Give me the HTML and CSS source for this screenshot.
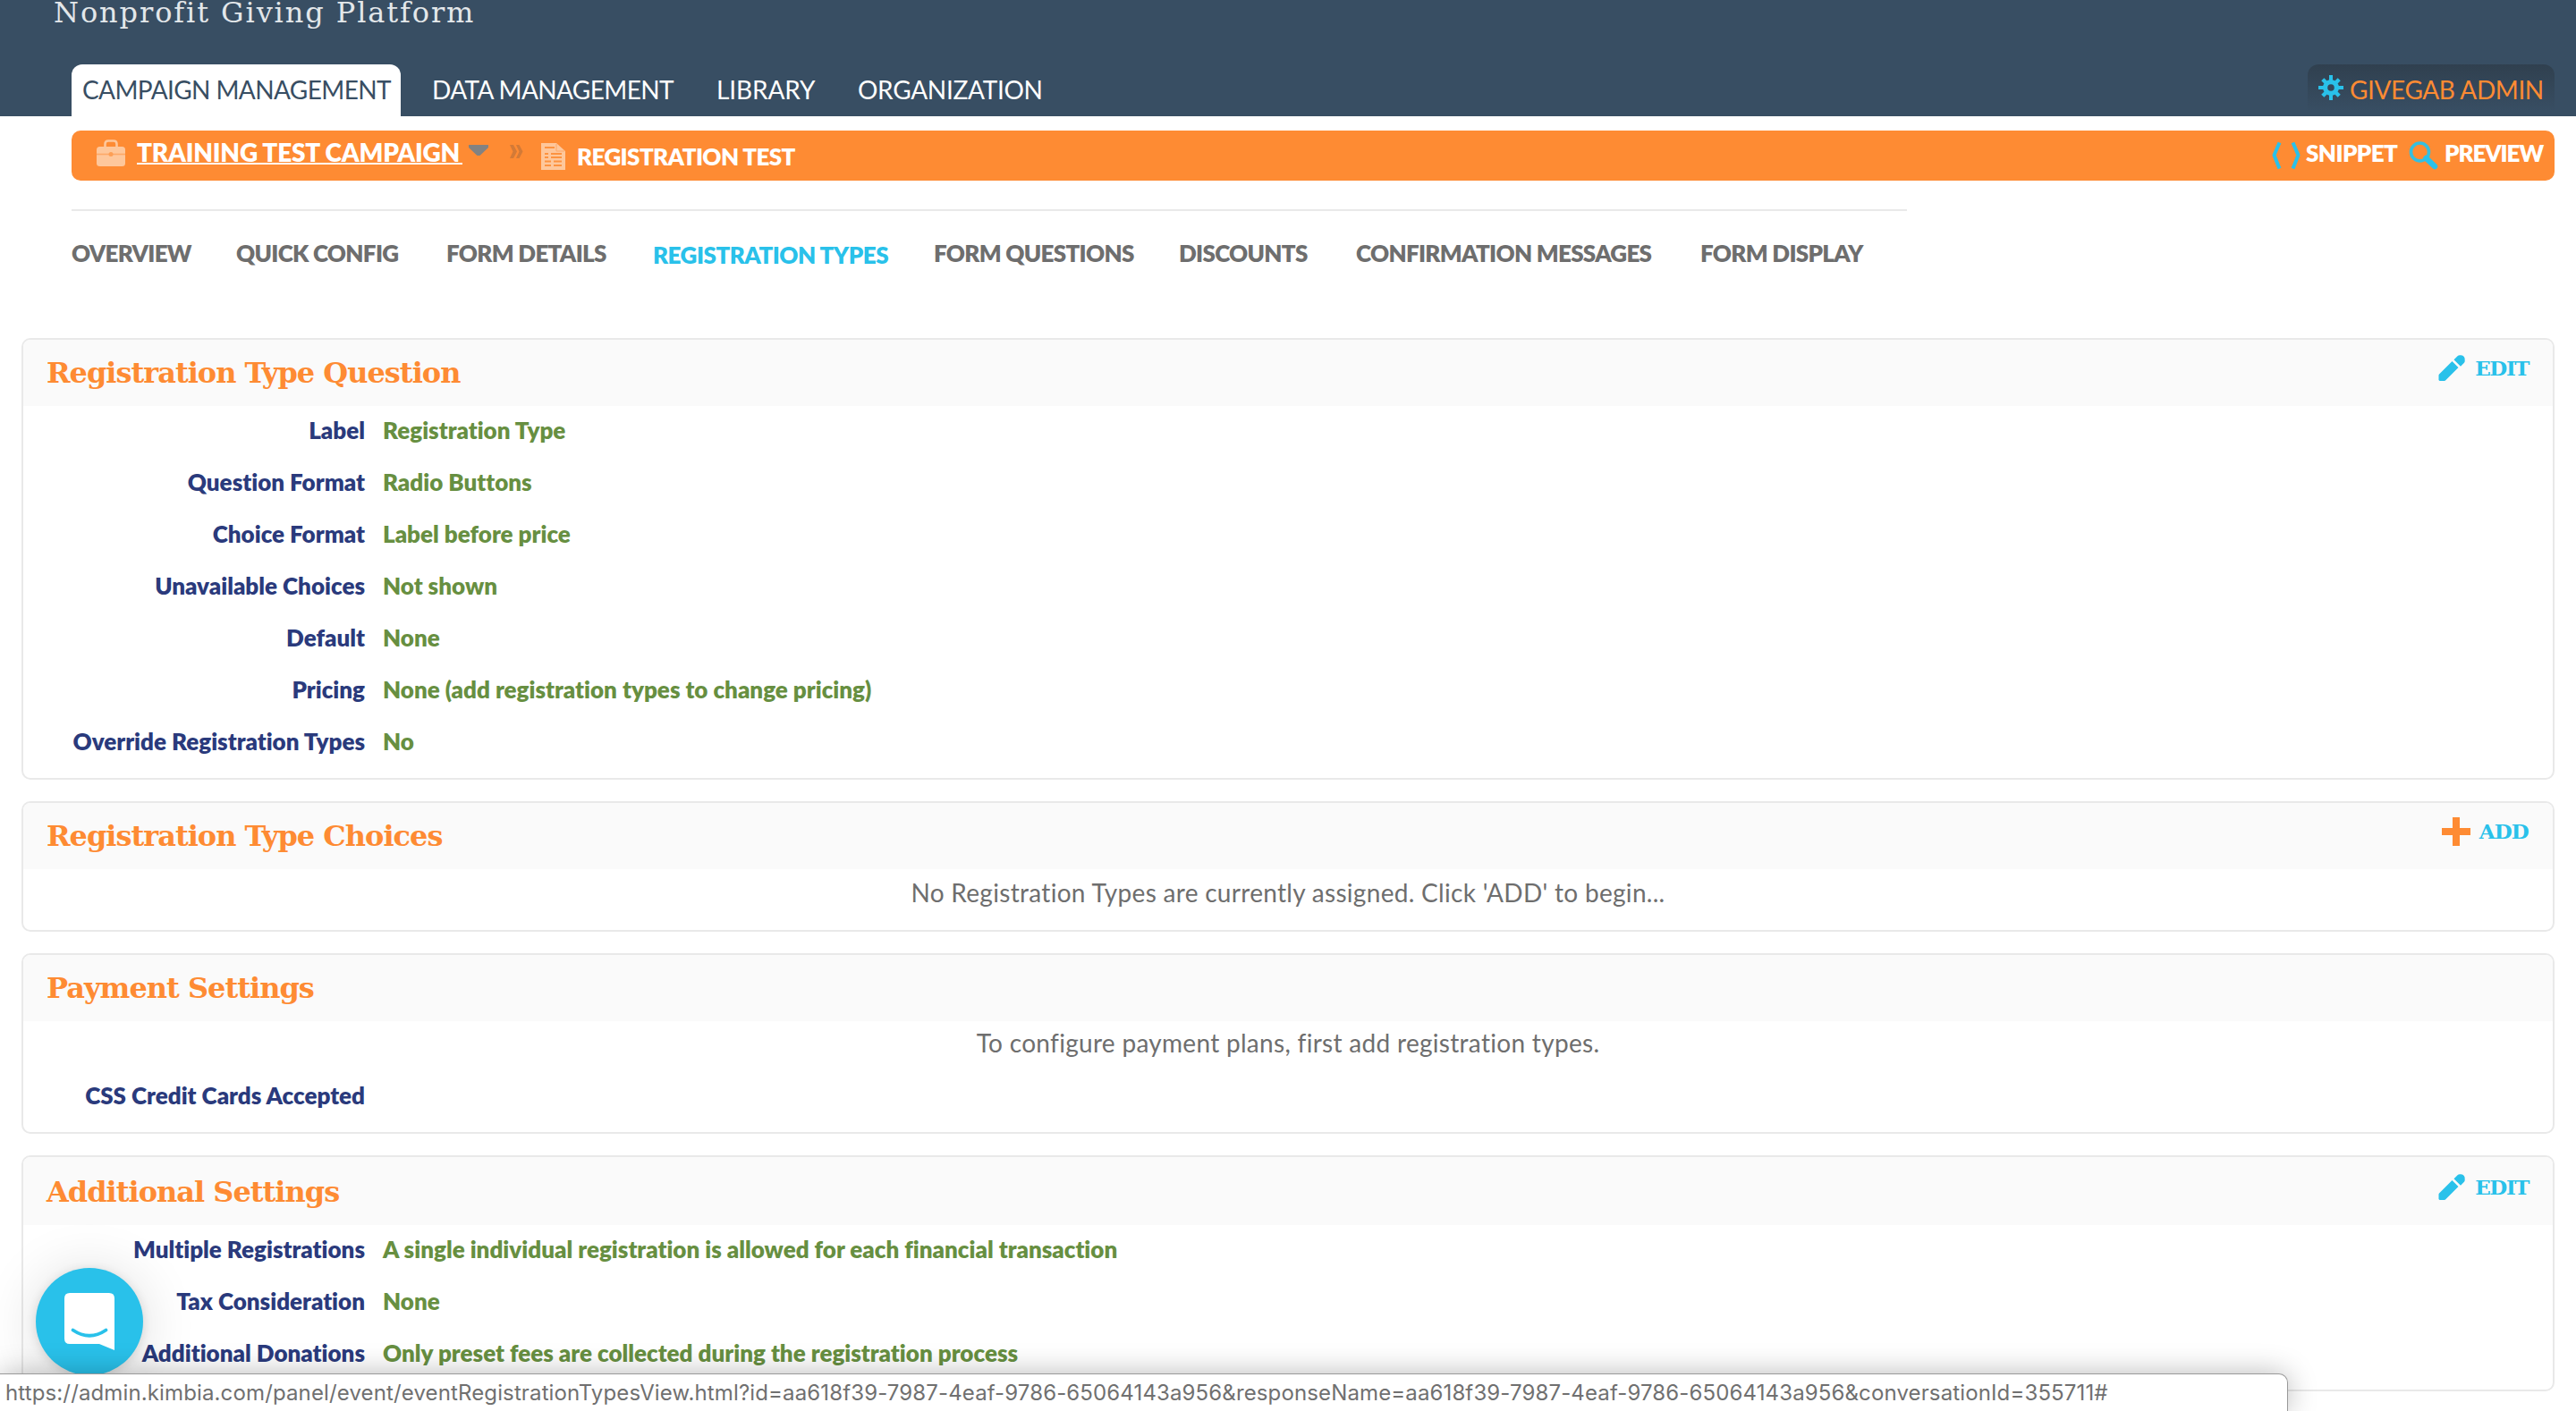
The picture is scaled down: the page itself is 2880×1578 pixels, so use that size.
FILE: index.html
```html
<!DOCTYPE html>
<html lang="en">
<head>
<meta charset="utf-8">
<title>Registration Types</title>
<link rel="stylesheet" href="styles.css">
</head>
<body>
<svg width="0" height="0" class="defs" aria-hidden="true">
  <symbol id="pencil" viewBox="0 0 30 30"><path d="M1 21.500 15.500 7l7 7L8 28.500 7 29H1.500L.5 28v-5.500zM17.500 5.200 21.500 1.200q1-.9 2.500-.9h1.500Q30 1 29.700 5.500V7q0 1-1 2l-3.700 3.700z" fill="#29c1ea"/></symbol>
</svg>

<header class="top">
  <div class="brand">Nonprofit Giving Platform</div>
  <div class="top-row">
    <nav class="tabs">
      <a class="tab current">CAMPAIGN MANAGEMENT</a>
      <a class="tab data">DATA MANAGEMENT</a>
      <a class="tab library">LIBRARY</a>
      <a class="tab organization">ORGANIZATION</a>
    </nav>
    <a class="admin">
      <svg class="gear" viewBox="-14 -14 28 28"><g fill="#29c1ea"><rect x="-2" y="-14" width="4" height="28"/><rect x="-14" y="-2" width="28" height="4"/><rect x="-2.200" y="-13" width="4.400" height="26" transform="rotate(45)"/><rect x="-2.200" y="-13" width="4.400" height="26" transform="rotate(-45)"/><circle r="9"/></g><circle r="3.800" fill="#34475a"/></svg>
      <span>GIVEGAB ADMIN</span>
    </a>
  </div>
</header>

<div class="crumbs">
  <svg class="briefcase" viewBox="0 0 32 30"><path d="M9.500 9V5q0-3.500 3.500-3.500h6q3.500 0 3.500 3.500v4" fill="none" stroke="#fec79b" stroke-width="2.600"/><rect y="8" width="32" height="22" rx="3.500" fill="#fec79b"/><path d="M0 16.500h32" stroke="#fda968" stroke-width="1.600"/><circle cx="16" cy="16.500" r="2.500" fill="#fd9f55"/></svg>
  <a class="campaign">TRAINING TEST CAMPAIGN</a>
  <svg class="caret" viewBox="0 0 22 12"><path d="M0 0h22v3L12.500 12h-3L0 3z" fill="#828282"/></svg>
  <svg class="chevrons" viewBox="0 0 16 15"><path d="M1 0h4l4 7.500L5 15H1l3.500-7.500zM8 0h3.500l4 7.500-4 7.500H8l3.500-7.500z" fill="#d37a37"/></svg>
  <svg class="doc" viewBox="0 0 27 30"><path d="M0 0h17l10 9v21H0z" fill="#fec79b"/><path d="M4 5h11M11 12h12M11 16h12M4 12h4M4 16h4M4 20.500h7M14 20.500h9M4 25h7M14 25h9" stroke="#fd9340" stroke-width="2"/><path d="M17 1v8h9" fill="none" stroke="#fda968" stroke-width="1"/></svg>
  <span class="form-name">REGISTRATION TEST</span>
  <div class="actions">
    <svg class="braces" viewBox="0 0 32 32"><path d="M8.500 1.500 2.500 15.500l6 15M23.500 1.500l6 14-6 15" fill="none" stroke="#29c1ea" stroke-width="4" stroke-linejoin="round"/></svg>
    <a class="snippet">SNIPPET</a>
    <svg class="lens" viewBox="0 0 33 32"><circle cx="12.500" cy="12" r="10" fill="none" stroke="#35bfdf" stroke-width="3.600"/><path d="m19.500 19 9.500 9" stroke="#29c1ea" stroke-width="6.500" stroke-linecap="round"/></svg>
    <a class="preview">PREVIEW</a>
  </div>
</div>

<nav class="subnav">
  <a>OVERVIEW</a><a>QUICK CONFIG</a><a>FORM DETAILS</a><a class="active">REGISTRATION TYPES</a><a>FORM QUESTIONS</a><a>DISCOUNTS</a><a>CONFIRMATION MESSAGES</a><a>FORM DISPLAY</a>
</nav>

<main class="cards">
  <section class="card">
    <div class="card-head"><h2>Registration Type Question</h2><a class="action edit"><svg viewBox="0 0 30 30"><use href="#pencil"/></svg>EDIT</a></div>
    <dl class="fields">
      <dt>Label</dt><dd>Registration Type</dd>
      <dt>Question Format</dt><dd>Radio Buttons</dd>
      <dt>Choice Format</dt><dd>Label before price</dd>
      <dt>Unavailable Choices</dt><dd>Not shown</dd>
      <dt>Default</dt><dd>None</dd>
      <dt>Pricing</dt><dd>None (add registration types to change pricing)</dd>
      <dt>Override Registration Types</dt><dd>No</dd>
    </dl>
  </section>

  <section class="card">
    <div class="card-head"><h2>Registration Type Choices</h2><a class="action add"><svg viewBox="0 0 32 32"><path d="M12 0h8v12h12v8H20v12h-8V20H0v-8h12z" fill="#fe8b33"/></svg>ADD</a></div>
    <p class="note empty">No Registration Types are currently assigned. Click 'ADD' to begin...</p>
  </section>

  <section class="card">
    <div class="card-head"><h2>Payment Settings</h2></div>
    <p class="note plans">To configure payment plans, first add registration types.</p>
    <dl class="fields">
      <dt>CSS Credit Cards Accepted</dt><dd></dd>
    </dl>
  </section>

  <section class="card">
    <div class="card-head tall"><h2>Additional Settings</h2><a class="action edit"><svg viewBox="0 0 30 30"><use href="#pencil"/></svg>EDIT</a></div>
    <dl class="fields">
      <dt>Multiple Registrations</dt><dd>A single individual registration is allowed for each financial transaction</dd>
      <dt>Tax Consideration</dt><dd>None</dd>
      <dt>Additional Donations</dt><dd>Only preset fees are collected during the registration process</dd>
    </dl>
  </section>
</main>

<button class="chat" aria-label="Open chat">
  <svg viewBox="0 0 56 64"><path d="M6 0h44q6 0 6 6v58L39 57H6q-6 0-6-6V6q0-6 6-6z" fill="#fff"/><path d="M9.500 41.500q18.500 12.500 37 0" fill="none" stroke="#29c1ea" stroke-width="3.800" stroke-linecap="round"/></svg>
</button>
<div class="status">https://admin.kimbia.com/panel/event/eventRegistrationTypesView.html?id=aa618f39-7987-4eaf-9786-65064143a956&amp;responseName=aa618f39-7987-4eaf-9786-65064143a956&amp;conversationId=355711#</div>
</body>
</html>
```
FILE: styles.css
```css
* { box-sizing: border-box; }

html, body { margin: 0; height: 1578px; overflow: hidden; }

body {
  position: relative;
  background: #fff;
  font-family: Lato, "Open Sans", sans-serif;
  font-size: 26px;
  font-variant-ligatures: none;
  color: #6e6e6e;
}

svg { display: block; flex: none; }
.defs { position: absolute; }

/* Header */
.top { height: 130px; background: #384e63; }

.brand {
  height: 72px;
  padding-left: 60px;
  font: 400 32px/29px "DejaVu Serif", serif;
  letter-spacing: 1.9px;
  color: #e3e7ea;
}

.top-row {
  display: flex;
  justify-content: space-between;
  height: 58px;
  padding: 0 24px 0 80px;
  font-size: 28px;
  line-height: 56px;
  letter-spacing: -0.6px;
}

.tabs { display: grid; grid-template-columns: 368px 351px 157px 220px; }
.tab { color: #fff; white-space: nowrap; }
.tab.current { padding-left: 12px; border-radius: 12px 12px 0 0; background: #fff; color: #384e63; }
.tab.data { padding-left: 35px; }
.tab.library { padding-left: 2px; letter-spacing: -0.1px; }
.tab.organization { padding-left: 3px; letter-spacing: -0.3px; }

.admin {
  display: flex;
  gap: 7px;
  width: 276px;
  padding-left: 12px;
  border-radius: 12px 12px 0 0;
  background: linear-gradient(#30404f, #384e63 90%);
  letter-spacing: -0.4px;
  color: #fe8b33;
}
.gear { width: 28px; height: 28px; margin-top: 12px; }

/* Breadcrumb bar */
.crumbs {
  display: flex;
  align-items: flex-start;
  height: 56px;
  margin: 16px 24px 0 80px;
  padding: 0 13px 0 28px;
  border-radius: 10px;
  background: #fe8b33;
  font-weight: 800;
  line-height: 30px;
  color: #fff;
}
.briefcase { width: 32px; height: 30px; margin-top: 10px; }
.campaign {
  width: 364px;
  height: 29px;
  margin: 9px 0 0 13px;
  border-bottom: 2px solid #fff;
  font-size: 28px;
  line-height: 30px;
  letter-spacing: -0.2px;
  white-space: nowrap;
}
.caret { width: 22px; height: 12px; margin: 16px 0 0 7px; }
.chevrons { width: 16px; height: 15px; margin: 16px 0 0 23px; }
.doc { width: 27px; height: 30px; margin: 14px 0 0 20px; }
.form-name { margin: 14px 0 0 13px; letter-spacing: -0.6px; }
.actions { display: flex; align-items: flex-start; margin-left: auto; letter-spacing: -0.6px; }
.braces { width: 32px; height: 32px; margin-top: 12px; }
.snippet { width: 102px; margin: 10px 0 0 6px; }
.lens { width: 33px; height: 32px; margin: 12px 0 0 13px; }
.preview { width: 110px; margin: 10px 0 0 7px; letter-spacing: -1.1px; }

/* Section navigation */
.subnav {
  display: grid;
  grid-template-columns: 184px 235px 231px 314px 274px 198px 385px 1fr;
  width: 2052px;
  height: 144px;
  margin: 32px 0 0 80px;
  padding: 32px 0 0;
  border-top: 2px solid #e9e9e9;
  font-weight: 800;
  line-height: 30px;
  letter-spacing: -0.7px;
  white-space: nowrap;
}
.subnav .active { padding-top: 2px; letter-spacing: -0.5px; color: #29c1ea; }

/* Cards */
.cards { display: grid; gap: 24px; padding: 0 24px; }
.card { overflow: hidden; border: 2px solid #e9e9e9; border-radius: 10px; }

.card-head {
  display: flex;
  justify-content: space-between;
  align-items: flex-start;
  height: 74px;
  padding: 16px 27px 0 26px;
  background: #fafafa;
  font-family: "DejaVu Serif", serif;
  font-weight: 700;
}
.card-head.tall { height: 76px; padding-top: 18px; }
.card-head h2 { margin: 0; font-size: 32px; line-height: 42px; letter-spacing: -1px; color: #fe8b33; }

.action { display: flex; font-size: 23px; line-height: 32px; letter-spacing: -1.4px; color: #29c1ea; }
.edit { gap: 11px; }
.edit svg { width: 30px; height: 30px; margin-top: 1px; }
.add { gap: 10px; letter-spacing: -0.8px; }
.add svg { width: 32px; height: 32px; }

.fields {
  display: grid;
  grid-template-columns: 382px 1fr;
  gap: 28px 20px;
  margin: 0;
  padding: 12px 0 26px;
  font-weight: 800;
  line-height: 30px;
}
.fields dt { text-align: right; color: #2a3a7c; }
.fields dd { margin: 0; color: #678f41; }

.note { margin: 0; text-align: center; font-size: 28px; line-height: 34px; letter-spacing: 0.3px; }
.note.empty { padding: 9px 0 25px; }
.note.plans { padding: 7px 0 15px; }

/* Chat launcher */
.chat {
  position: absolute;
  left: 40px;
  top: 1418px;
  display: grid;
  place-items: center;
  width: 120px;
  height: 120px;
  padding: 0;
  border: 0;
  border-radius: 50%;
  background: #29c1ea;
  box-shadow: 0 2px 12px rgba(0, 0, 0, .12), 0 4px 64px rgba(0, 0, 0, .14);
}
.chat svg { width: 56px; height: 64px; }

/* Link target shown at the bottom of the window */
.status {
  position: absolute;
  left: 0;
  top: 1536px;
  width: 2558px;
  height: 44px;
  padding-left: 6px;
  border: 1px solid #999;
  border-left: 0;
  border-radius: 0 10px 0 0;
  background: #fff;
  box-shadow: 0 0 32px rgba(0, 0, 0, .28);
  font: 400 24px/41px Inter, sans-serif;
  letter-spacing: 0.13px;
  white-space: nowrap;
  color: #707070;
}
```
